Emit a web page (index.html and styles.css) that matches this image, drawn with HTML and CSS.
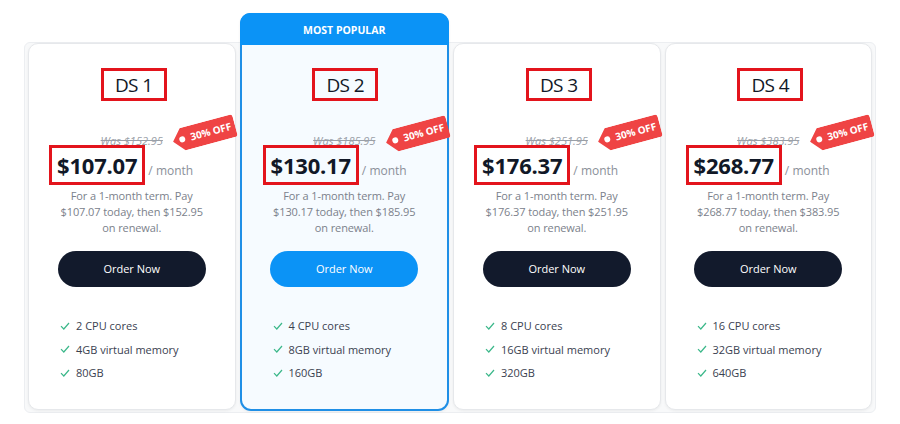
FILE: index.html
```html
<!DOCTYPE html>
<html>
<head>
<meta charset="utf-8">
<link rel="stylesheet" href="styles.css">
</head>
<body>
<div class="plans">
  <div class="card">
    <div class="body">
      <div class="title"><span class="hl">DS 1</span></div>
      <div class="was">Was $152.95</div>
      <div class="tag"><svg class="tag-shape" viewBox="0 0 64 23"><path d="M10 0 H61 a3 3 0 0 1 3 3 V20 a3 3 0 0 1 -3 3 H10 L0 11.5 Z" fill="#ef4444"/><circle cx="9.5" cy="11.5" r="3" fill="#fff"/></svg><span>30% OFF</span></div>
      <div class="price-row"><span class="price hl">$107.07</span><span class="per">/ month</span></div>
      <p class="desc">For a 1-month term. Pay<br>$107.07 today, then $152.95<br>on renewal.</p>
      <div class="btn-wrap"><span class="btn">Order Now</span></div>
      <ul class="features">
        <li><svg class="check" viewBox="0 0 10 8"><path d="M1 4.2 L3.8 7 L9 1" fill="none" stroke="#3cb88a" stroke-width="1.2"/></svg>2 CPU cores</li>
        <li><svg class="check" viewBox="0 0 10 8"><path d="M1 4.2 L3.8 7 L9 1" fill="none" stroke="#3cb88a" stroke-width="1.2"/></svg>4GB virtual memory</li>
        <li><svg class="check" viewBox="0 0 10 8"><path d="M1 4.2 L3.8 7 L9 1" fill="none" stroke="#3cb88a" stroke-width="1.2"/></svg>80GB</li>
      </ul>
    </div>
  </div>
  <div class="card popular">
    <div class="pop-head">MOST POPULAR</div>
    <div class="body">
      <div class="title"><span class="hl">DS 2</span></div>
      <div class="was">Was $185.95</div>
      <div class="tag"><svg class="tag-shape" viewBox="0 0 64 23"><path d="M10 0 H61 a3 3 0 0 1 3 3 V20 a3 3 0 0 1 -3 3 H10 L0 11.5 Z" fill="#ef4444"/><circle cx="9.5" cy="11.5" r="3" fill="#fff"/></svg><span>30% OFF</span></div>
      <div class="price-row"><span class="price hl">$130.17</span><span class="per">/ month</span></div>
      <p class="desc">For a 1-month term. Pay<br>$130.17 today, then $185.95<br>on renewal.</p>
      <div class="btn-wrap"><span class="btn blue">Order Now</span></div>
      <ul class="features">
        <li><svg class="check" viewBox="0 0 10 8"><path d="M1 4.2 L3.8 7 L9 1" fill="none" stroke="#3cb88a" stroke-width="1.2"/></svg>4 CPU cores</li>
        <li><svg class="check" viewBox="0 0 10 8"><path d="M1 4.2 L3.8 7 L9 1" fill="none" stroke="#3cb88a" stroke-width="1.2"/></svg>8GB virtual memory</li>
        <li><svg class="check" viewBox="0 0 10 8"><path d="M1 4.2 L3.8 7 L9 1" fill="none" stroke="#3cb88a" stroke-width="1.2"/></svg>160GB</li>
      </ul>
    </div>
  </div>
  <div class="card">
    <div class="body">
      <div class="title"><span class="hl">DS 3</span></div>
      <div class="was">Was $251.95</div>
      <div class="tag"><svg class="tag-shape" viewBox="0 0 64 23"><path d="M10 0 H61 a3 3 0 0 1 3 3 V20 a3 3 0 0 1 -3 3 H10 L0 11.5 Z" fill="#ef4444"/><circle cx="9.5" cy="11.5" r="3" fill="#fff"/></svg><span>30% OFF</span></div>
      <div class="price-row"><span class="price hl">$176.37</span><span class="per">/ month</span></div>
      <p class="desc">For a 1-month term. Pay<br>$176.37 today, then $251.95<br>on renewal.</p>
      <div class="btn-wrap"><span class="btn">Order Now</span></div>
      <ul class="features">
        <li><svg class="check" viewBox="0 0 10 8"><path d="M1 4.2 L3.8 7 L9 1" fill="none" stroke="#3cb88a" stroke-width="1.2"/></svg>8 CPU cores</li>
        <li><svg class="check" viewBox="0 0 10 8"><path d="M1 4.2 L3.8 7 L9 1" fill="none" stroke="#3cb88a" stroke-width="1.2"/></svg>16GB virtual memory</li>
        <li><svg class="check" viewBox="0 0 10 8"><path d="M1 4.2 L3.8 7 L9 1" fill="none" stroke="#3cb88a" stroke-width="1.2"/></svg>320GB</li>
      </ul>
    </div>
  </div>
  <div class="card">
    <div class="body">
      <div class="title"><span class="hl">DS 4</span></div>
      <div class="was">Was $383.95</div>
      <div class="tag"><svg class="tag-shape" viewBox="0 0 64 23"><path d="M10 0 H61 a3 3 0 0 1 3 3 V20 a3 3 0 0 1 -3 3 H10 L0 11.5 Z" fill="#ef4444"/><circle cx="9.5" cy="11.5" r="3" fill="#fff"/></svg><span>30% OFF</span></div>
      <div class="price-row"><span class="price hl">$268.77</span><span class="per">/ month</span></div>
      <p class="desc">For a 1-month term. Pay<br>$268.77 today, then $383.95<br>on renewal.</p>
      <div class="btn-wrap"><span class="btn">Order Now</span></div>
      <ul class="features">
        <li><svg class="check" viewBox="0 0 10 8"><path d="M1 4.2 L3.8 7 L9 1" fill="none" stroke="#3cb88a" stroke-width="1.2"/></svg>16 CPU cores</li>
        <li><svg class="check" viewBox="0 0 10 8"><path d="M1 4.2 L3.8 7 L9 1" fill="none" stroke="#3cb88a" stroke-width="1.2"/></svg>32GB virtual memory</li>
        <li><svg class="check" viewBox="0 0 10 8"><path d="M1 4.2 L3.8 7 L9 1" fill="none" stroke="#3cb88a" stroke-width="1.2"/></svg>640GB</li>
      </ul>
    </div>
  </div>
</div>
</body>
</html>
```
FILE: styles.css
```css
* { box-sizing: border-box; }
body {
  margin: 0;
  background: #fff;
  font-family: "Open Sans", "Noto Sans", sans-serif;
  color: #111827;
}
.plans {
  margin: 42px 0 0 24px;
  width: 852px;
  height: 371px;
  border: 1px solid #eceef1;
  border-radius: 6px;
  background: #f8f9fa;
  padding: 0 3px 2px;
  display: flex;
  gap: 4px;
}
.card {
  flex: 1;
  position: relative;
  background: #fff;
  border: 1px solid #e6e8eb;
  border-radius: 10px;
  box-shadow: 0 1px 3px rgba(0,0,0,0.06);
  display: flex;
  flex-direction: column;
}
.card.popular {
  margin-top: -30px;
  margin-bottom: -1px;
  border: 2px solid #1f8fe6;
  background: #f6fbff;
  border-radius: 11px;
}
.pop-head {
  background: #0b93f6;
  color: #fff;
  font-size: 10.5px;
  font-weight: 700;
  text-align: center;
  height: 32px;
  line-height: 34px;
  margin: -2px -2px 0;
  border-radius: 10px 10px 0 0;
}
.body {
  position: relative;
  flex: 1;
  padding-top: 24px;
}
.popular .body { padding-top: 23px; }
.title {
  display: flex;
  justify-content: center;
  padding-left: 4px;
}
.popular .title { padding-left: 2px; }
.title .hl {
  display: inline-block;
  border: 3px solid #e3141c;
  height: 33px;
  width: 66px;
  text-align: center;
  font-size: 19px;
  font-weight: 400;
  line-height: 28px;
  letter-spacing: -0.6px;
}
.was {
  margin-top: 33px;
  text-align: center;
  font-size: 11px;
  font-style: italic;
  color: #9aa0a8;
  text-decoration: line-through;
  line-height: 14px;
}
.tag {
  position: absolute;
  left: 143px;
  top: 78px;
  width: 64px;
  height: 23px;
  transform: rotate(-15deg);
  color: #fff;
  font-size: 10px;
  font-weight: 700;
  line-height: 23px;
  padding-left: 18px;
  white-space: nowrap;
}
.tag-shape {
  position: absolute;
  left: 0;
  top: 0;
  width: 64px;
  height: 23px;
}
.tag span { position: relative; }
.price-row {
  display: flex;
  align-items: flex-end;
  margin: -3px 0 0 20px;
}
.popular .price-row { margin-left: 21px; }
.price {
  display: inline-block;
  border: 3px solid #e3141c;
  height: 40px;
  padding: 0 5px;
  font-size: 22px;
  font-weight: 700;
  line-height: 34px;
  letter-spacing: -0.2px;
}
.per {
  font-size: 12px;
  color: #8b9099;
  margin-left: 3px;
  line-height: 20px;
  margin-bottom: 4px;
}
.desc {
  margin: 3px 0 0;
  text-align: center;
  font-size: 11px;
  line-height: 16px;
  letter-spacing: -0.1px;
  color: #7b818b;
}
.btn-wrap {
  margin-top: 15px;
  display: flex;
  justify-content: center;
}
.btn {
  width: 148px;
  height: 36px;
  border-radius: 18px;
  background: #121a2c;
  color: #fff;
  font-size: 11px;
  font-weight: 500;
  line-height: 36px;
  text-align: center;
}
.btn.blue { background: #0b93f6; }
.features {
  list-style: none;
  margin: 27px 0 0;
  padding: 0 0 0 31px;
}
.features li {
  display: flex;
  align-items: center;
  font-size: 11px;
  color: #3a4150;
  height: 23.5px;
}
.check {
  width: 10px;
  height: 8px;
  margin-right: 6px;
}
```
